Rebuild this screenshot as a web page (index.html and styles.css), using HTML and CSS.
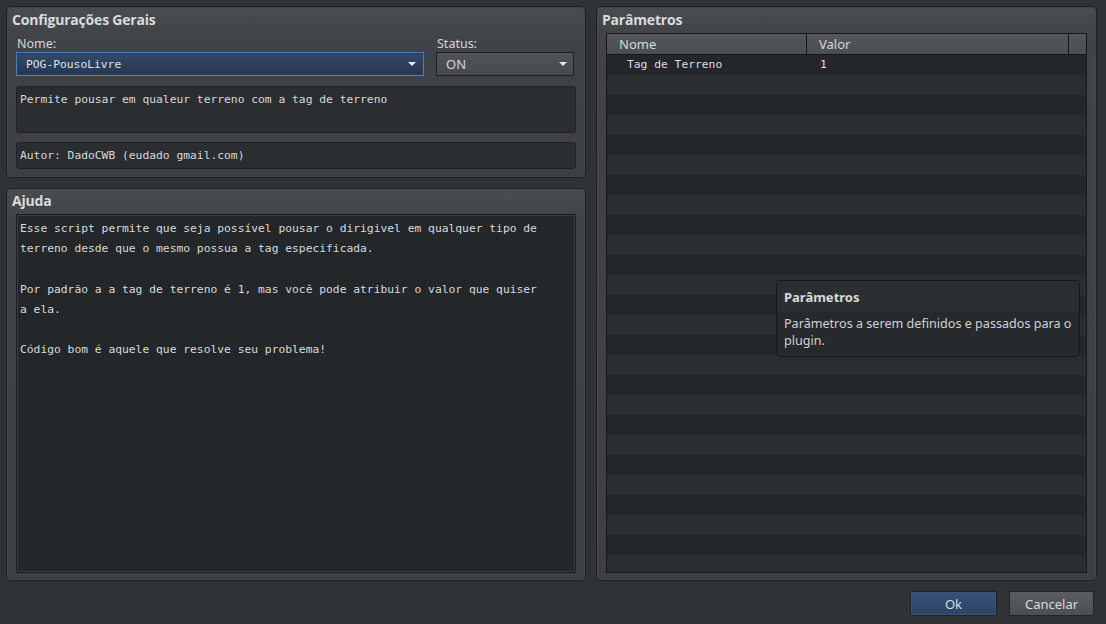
FILE: index.html
```html
<!DOCTYPE html>
<html lang="pt">
<head>
<meta charset="utf-8">
<title>Plugin</title>
<link rel="stylesheet" href="styles.css">
</head>
<body>
<div class="window">
  <div class="main">
    <div class="left">
      <section class="panel general">
        <h2 class="panel-title">Configurações Gerais</h2>
        <div class="row-fields">
          <div class="field name-field">
            <label class="label">Nome:</label>
            <div class="select select-focus"><span>POG-PousoLivre</span><i class="arrow"></i></div>
          </div>
          <div class="field status-field">
            <label class="label">Status:</label>
            <div class="select select-status"><span>ON</span><i class="arrow"></i></div>
          </div>
        </div>
        <div class="box desc">Permite pousar em qualeur terreno com a tag de terreno</div>
        <div class="box author">Autor: DadoCWB (eudado gmail.com)</div>
      </section>
      <section class="panel help">
        <h2 class="panel-title">Ajuda</h2>
        <div class="textarea">Esse script permite que seja possível pousar o dirigivel em qualquer tipo de
terreno desde que o mesmo possua a tag especificada.

Por padrão a a tag de terreno é 1, mas você pode atribuir o valor que quiser
a ela.

Código bom é aquele que resolve seu problema!</div>
      </section>
    </div>
    <section class="panel params">
      <h2 class="panel-title">Parâmetros</h2>
      <div class="table">
        <div class="thead">
          <div class="th col-name">Nome</div>
          <div class="th col-value">Valor</div>
          <div class="th col-extra"></div>
        </div>
        <div class="tbody">
          <div class="tr">
            <div class="td col-name">Tag de Terreno</div>
            <div class="td col-value">1</div>
          </div>
        </div>
      </div>
      <div class="tooltip">
        <div class="tip-title">Parâmetros</div>
        <div class="tip-body">Parâmetros a serem definidos e passados para o plugin.</div>
      </div>
    </section>
  </div>
  <div class="footer">
    <button class="btn btn-ok">Ok</button>
    <button class="btn btn-cancel">Cancelar</button>
  </div>
</div>
</body>
</html>
```
FILE: styles.css
```css
* { box-sizing: border-box; }
html, body { margin: 0; padding: 0; }
body {
  width: 1106px;
  height: 624px;
  background: #303336;
  font-family: "Noto Sans", "Open Sans", sans-serif;
  color: #d6d8da;
  overflow: hidden;
}
.window {
  display: flex;
  flex-direction: column;
  height: 624px;
  padding: 6px 12px 8px 6px;
}
.main {
  display: flex;
  gap: 10px;
  height: 575px;
  margin-right: -3px;
}
.left {
  width: 580px;
  display: flex;
  flex-direction: column;
  gap: 10px;
}
.panel {
  border: 1px solid #1f2123;
  border-radius: 5px;
  background: linear-gradient(#4a4d50 0px, #414447 30px, #3d4043 100%);
  box-shadow: inset 0 0 0 1px #45484b;
  position: relative;
}
.panel-title {
  margin: 0 0 0 -4px;
  font-family: "Open Sans", "Noto Sans", sans-serif;
  font-size: 14px;
  font-weight: bold;
  color: #d9dbdd;
  line-height: 16px;
  padding: 5px 0 0 0;
  letter-spacing: -0.2px;
}
.general {
  height: 172px;
  padding: 0 9px 0 9px;
}
.row-fields {
  display: flex;
  gap: 12px;
  margin-top: 6px;
}
.field { display: flex; flex-direction: column; }
.name-field { width: 408px; }
.status-field { width: 138px; }
.label {
  font-size: 12.5px;
  line-height: 17px;
  padding-left: 1px;
  color: #d4d6d8;
  margin-top: 1px;
}
.select {
  height: 24px;
  border: 1px solid #1c1e20;
  display: flex;
  align-items: center;
  justify-content: space-between;
  padding: 0 7px 0 9px;
  font-family: "DejaVu Sans Mono", monospace;
  font-size: 11.3px;
}
.select-focus {
  border: 1px solid #4f7fb4;
  background: linear-gradient(#34496a, #26374f);
  box-shadow: inset 0 0 0 1px #2b3f5c;
  color: #dfe3e8;
}
.select-status {
  background: linear-gradient(#50545a, #46494d);
  font-family: "Noto Sans", sans-serif;
  font-size: 13px;
  padding-left: 9px;
  padding-right: 6px;
  color: #d4d6d8;
}
.arrow {
  width: 0; height: 0;
  border-left: 4px solid transparent;
  border-right: 4px solid transparent;
  border-top: 4px solid #e8e8e8;
}
.box {
  background: #2b2e31;
  border: 1px solid #1f2123;
  border-radius: 3px;
  font-family: "DejaVu Sans Mono", monospace;
  font-size: 11.3px;
  line-height: 20px;
  padding: 3px 3px;
  color: #d6d8da;
  width: 560px;
}
.desc { height: 47px; margin-top: 10px; }
.author { height: 27px; margin-top: 9px; padding-top: 3px; }
.help {
  flex: 1;
  padding: 0 9px 7px 9px;
  display: flex;
  flex-direction: column;
}
.help .panel-title { padding-top: 4px; padding-bottom: 5px; }
.textarea {
  flex: 1;
  width: 560px;
  background: #24272a;
  border: 1px solid #1b1d1f;
  box-shadow: inset 0 0 0 1px #3a3d40;
  font-family: "DejaVu Sans Mono", monospace;
  font-size: 11.3px;
  line-height: 20.2px;
  white-space: pre-wrap;
  padding: 4px 3px;
  color: #d8dadc;
}
.params {
  width: 501px;
  padding: 0 9px 7px 9px;
  display: flex;
  flex-direction: column;
}
.params .panel-title { padding-bottom: 5px; }
.table {
  flex: 1;
  border: 1px solid #15171a;
  display: flex;
  flex-direction: column;
  background: #2a2d30;
}
.thead {
  display: flex;
  height: 21px;
  background: linear-gradient(#54585c, #4a4e52);
  border-bottom: 1px solid #15171a;
}
.th {
  font-size: 13px;
  line-height: 20px;
  color: #d6d8da;
  padding-left: 12px;
}
.thead .col-name { width: 200px; border-right: 1px solid #15171a; }
.thead .col-value { width: 262px; border-right: 1px solid #15171a; }
.thead .col-extra { flex: 1; }
.tbody {
  flex: 1;
  background: repeating-linear-gradient(#23262a 0px, #23262a 20px, #2b2e31 20px, #2b2e31 40px);
}
.tr { display: flex; height: 20px; }
.td {
  font-family: "DejaVu Sans Mono", monospace;
  font-size: 11.3px;
  line-height: 20px;
  color: #dcdee0;
}
.tr .col-name { width: 201px; padding-left: 20px; }
.tr .col-value { padding-left: 12px; }
.tooltip {
  position: absolute;
  left: 179px;
  top: 273px;
  width: 304px;
  height: 77px;
  background: #272a2d;
  border: 1px solid #16181a;
  border-radius: 5px;
  overflow: hidden;
}
.tip-title {
  font-size: 13px;
  font-weight: bold;
  padding: 7px 6px 0 7px;
  height: 31px;
  background: #2c2f32;
  color: #d8dadc;
}
.tip-body {
  font-size: 12.6px;
  line-height: 17px;
  padding: 3px 4px 0 7px;
  color: #d0d2d4;
}
.footer {
  display: flex;
  justify-content: flex-end;
  gap: 12px;
  margin-top: 10px;
}
.btn {
  height: 25px;
  border-radius: 2px;
  font-family: "Noto Sans", sans-serif;
  font-size: 13px;
  color: #d8dadc;
  padding: 0;
}
.btn-ok {
  width: 87px;
  border: 1px solid #1d2227;
  background: linear-gradient(#37517a, #2c4364);
  box-shadow: inset 0 0 0 1px #3b5478;
}
.btn-cancel {
  width: 85px;
  border: 1px solid #222426;
  background: linear-gradient(#5a5e62, #4b4f53);
}
```
